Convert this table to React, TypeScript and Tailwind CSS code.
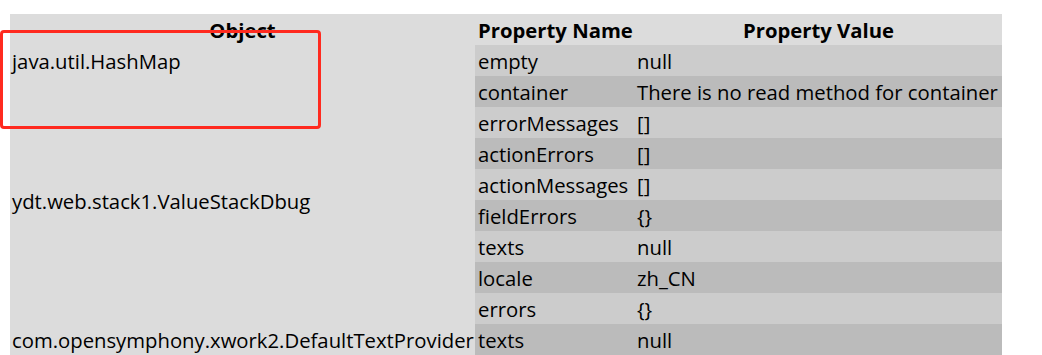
import React from "react";

type Prop = { name: string; value: string };

const rows: Prop[] = [
  { name: "empty", value: "null" },
  { name: "container", value: "There is no read method for container" },
  { name: "errorMessages", value: "[]" },
  { name: "actionErrors", value: "[]" },
  { name: "actionMessages", value: "[]" },
  { name: "fieldErrors", value: "{}" },
  { name: "texts", value: "null" },
  { name: "locale", value: "zh_CN" },
  { name: "errors", value: "{}" },
  { name: "texts", value: "null" },
];

const ObjectCell: React.FC<{ label?: string; className: string }> = ({ label, className }) => (
  <div className={`col-start-1 flex items-center pl-[2px] pt-[2px] bg-[#dcdcdc] ${className}`}>{label}</div>
);

const App: React.FC = () => {
  return (
    <div
      className="relative w-[1042px] h-[355px] bg-white overflow-hidden pt-[14px] pl-[10px] text-[20.3px] text-black"
      style={{ fontFamily: '"Open Sans", "Noto Sans", sans-serif' }}
    >
      <div className="grid grid-cols-[465px_158px_369px] auto-rows-[31px] bg-[#dcdcdc] w-[992px] leading-none">
        <div className="col-start-1 row-start-1 flex items-center justify-center pt-[1px] font-bold">Object</div>
        <div className="col-start-2 row-start-1 flex items-center pl-[3px] pt-[1px] font-bold whitespace-nowrap">Property Name</div>
        <div className="col-start-3 row-start-1 flex items-center justify-center pt-[1px] pl-[2px] font-bold">Property Value</div>

        <ObjectCell label="java.util.HashMap" className="row-start-2" />
        <ObjectCell className="row-start-3" />
        <ObjectCell label="ydt.web.stack1.ValueStackDbug" className="row-start-4 row-span-6" />
        <ObjectCell className="row-start-10" />
        <ObjectCell label="com.opensymphony.xwork2.DefaultTextProvider" className="row-start-11 whitespace-nowrap" />

        {rows.map((r, i) => (
          <React.Fragment key={i}>
            <div
              className={`col-start-2 flex items-center pl-[3px] pt-[2px] whitespace-nowrap ${
                i % 2 === 0 ? "bg-[#cccccc]" : "bg-[#bbbbbb]"
              }`}
              style={{ gridRowStart: i + 2 }}
            >
              {r.name}
            </div>
            <div
              className={`col-start-3 flex items-center pl-[4px] pt-[2px] whitespace-nowrap ${
                i % 2 === 0 ? "bg-[#cccccc]" : "bg-[#bbbbbb]"
              }`}
              style={{ gridRowStart: i + 2 }}
            >
              {r.value}
            </div>
          </React.Fragment>
        ))}
      </div>

      {/* red annotation box */}
      <div className="absolute left-0 top-[30px] w-[321px] h-[99px] border-[3px] border-[#ff2a1f] rounded-[4px]" />
    </div>
  );
};

export default App;
